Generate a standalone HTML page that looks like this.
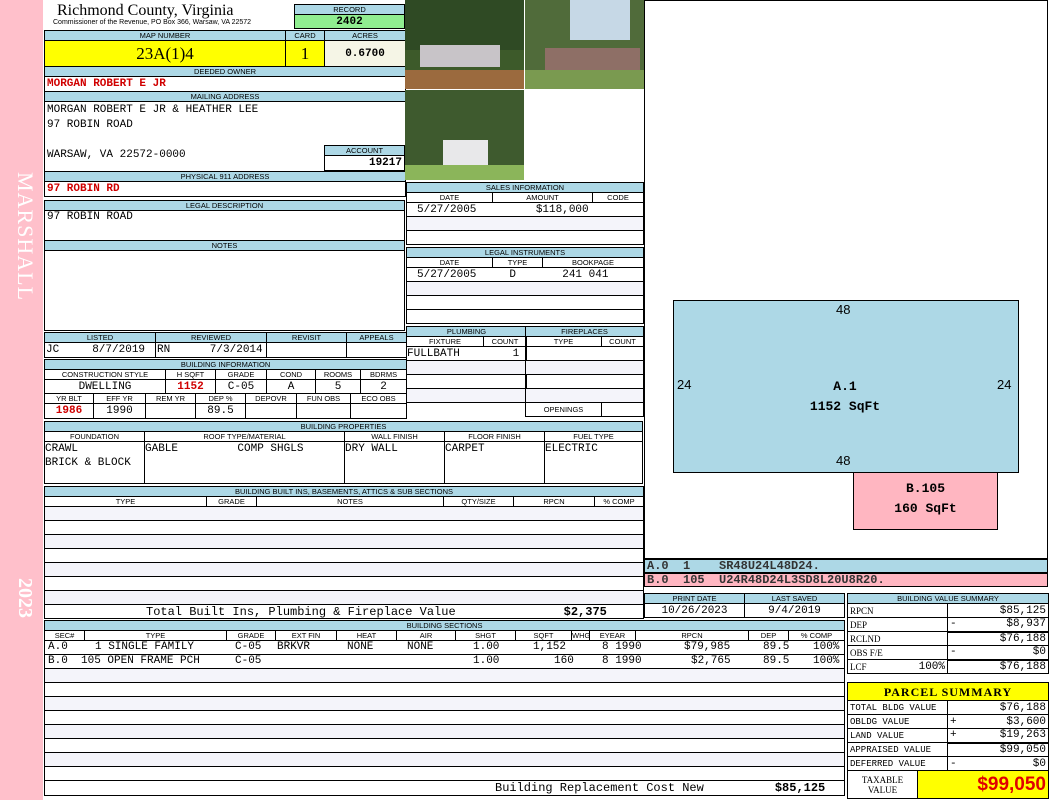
<!DOCTYPE html>
<html><head><meta charset="utf-8"><style>
*{margin:0;padding:0;box-sizing:border-box}
body{width:1050px;height:800px;position:relative;background:#fff;overflow:hidden;font-family:"Liberation Mono",monospace;font-size:11px;color:#000}
.a{position:absolute}
table{position:absolute;border-collapse:collapse;table-layout:fixed}
td{border:1px solid #000;padding:0 2px;overflow:hidden;white-space:nowrap;font-family:"Liberation Mono",monospace;font-size:11px;line-height:12px}
td.h{background:#add8e6;font-family:"Liberation Sans",sans-serif;font-size:7.5px;text-align:center;line-height:8px;height:10px;padding:0}
td.s{font-family:"Liberation Sans",sans-serif;font-size:7.5px;text-align:center;line-height:8px;height:10px;padding:0}
.c{text-align:center}.r{text-align:right}
.red{color:#d00000;font-weight:bold}
.g{background:#f4f4fa}
.box{position:absolute;border:1px solid #000}
</style></head><body>
<!-- sidebar -->
<div class="a" style="left:0;top:0;width:43px;height:800px;background:#ffc0cb"></div>
<div class="a" style="left:8px;top:172px;width:30px;height:145px;writing-mode:vertical-rl;font-family:'Liberation Serif',serif;font-size:22px;color:#fff;letter-spacing:1px">MARSHALL</div>
<div class="a" style="left:8px;top:578px;width:28px;height:50px;writing-mode:vertical-rl;font-family:'Liberation Serif',serif;font-size:20px;font-weight:bold;color:#fff">2023</div>

<!-- header -->
<div class="a" style="left:57px;top:2px;font-family:'Liberation Serif',serif;font-size:16px;line-height:18px">Richmond County, Virginia</div>
<div class="a" style="left:53px;top:19px;font-family:'Liberation Sans',sans-serif;font-size:7px;line-height:8px">Commissioner of the Revenue, PO Box 366, Warsaw, VA 22572</div>
<table style="left:294px;top:4px;width:111px"><tr><td class="h">RECORD</td></tr><tr><td class="c" style="background:#90ee90;font-weight:bold;height:14px">2402</td></tr></table>

<table style="left:44px;top:30px;width:361px">
<col style="width:241px"><col style="width:39px"><col style="width:81px">
<tr><td class="h">MAP NUMBER</td><td class="h">CARD</td><td class="h">ACRES</td></tr>
<tr><td class="c" style="background:#ffff00;height:26px;font-family:'Liberation Serif',serif;font-size:17px;line-height:20px">23A(1)4</td><td class="c" style="background:#ffff00;font-family:'Liberation Serif',serif;font-size:17px">1</td><td class="c" style="background:#f5f5e6;font-weight:bold">0.6700</td></tr>
<tr><td class="h" colspan="3">DEEDED OWNER</td></tr>
<tr><td colspan="3" class="red" style="height:15px">MORGAN ROBERT E JR</td></tr>
<tr><td class="h" colspan="3">MAILING ADDRESS</td></tr>
<tr><td colspan="3" style="height:70px;vertical-align:top;line-height:15px;padding-top:1px">MORGAN ROBERT E JR &amp; HEATHER LEE<br>97 ROBIN ROAD<br><br>WARSAW, VA 22572-0000</td></tr>
<tr><td class="h" colspan="3">PHYSICAL 911 ADDRESS</td></tr>
<tr><td colspan="3" class="red" style="height:15px">97 ROBIN RD</td></tr>
</table>
<table style="left:324px;top:145px;width:81px"><tr><td class="h">ACCOUNT</td></tr><tr><td class="r" style="height:15px;font-weight:bold;background:#fff">19217</td></tr></table>

<table style="left:44px;top:200px;width:361px">
<tr><td class="h">LEGAL DESCRIPTION</td></tr>
<tr><td style="height:30px;vertical-align:top">97 ROBIN ROAD</td></tr>
<tr><td class="h">NOTES</td></tr>
<tr><td style="height:80px"></td></tr>
</table>

<table style="left:44px;top:332px;width:362px">
<col style="width:111px"><col style="width:111px"><col style="width:80px"><col style="width:60px">
<tr><td class="h">LISTED</td><td class="h">REVIEWED</td><td class="h">REVISIT</td><td class="h">APPEALS</td></tr>
<tr><td style="height:15px;padding:0 1px">JC&nbsp;&nbsp;&nbsp;&nbsp;&nbsp;8/7/2019</td><td style="padding:0 1px">RN&nbsp;&nbsp;&nbsp;&nbsp;&nbsp;&nbsp;7/3/2014</td><td></td><td></td></tr>
</table>
<table style="left:44px;top:359px;width:362px">
<col style="width:121px"><col style="width:50px"><col style="width:51px"><col style="width:49px"><col style="width:45px"><col style="width:46px">
<tr><td class="h" colspan="6">BUILDING INFORMATION</td></tr>
<tr><td class="s">CONSTRUCTION STYLE</td><td class="s">H SQFT</td><td class="s">GRADE</td><td class="s">COND</td><td class="s">ROOMS</td><td class="s">BDRMS</td></tr>
<tr><td class="c" style="height:14px">DWELLING</td><td class="c red">1152</td><td class="c">C-05</td><td class="c">A</td><td class="c">5</td><td class="c">2</td></tr>
</table>
<table style="left:44px;top:393px;width:362px">
<col style="width:49px"><col style="width:52px"><col style="width:50px"><col style="width:50px"><col style="width:51px"><col style="width:54px"><col style="width:56px">
<tr><td class="s">YR BLT</td><td class="s">EFF YR</td><td class="s">REM YR</td><td class="s">DEP %</td><td class="s">DEPOVR</td><td class="s">FUN OBS</td><td class="s">ECO OBS</td></tr>
<tr><td class="c red" style="height:15px">1986</td><td class="c">1990</td><td></td><td class="c">89.5</td><td></td><td></td><td></td></tr>
</table>

<table style="left:44px;top:421px;width:598px">
<col style="width:100px"><col style="width:200px"><col style="width:100px"><col style="width:100px"><col style="width:98px">
<tr><td class="h" colspan="5">BUILDING PROPERTIES</td></tr>
<tr><td class="s">FOUNDATION</td><td class="s">ROOF TYPE/MATERIAL</td><td class="s">WALL FINISH</td><td class="s">FLOOR FINISH</td><td class="s">FUEL TYPE</td></tr>
<tr><td style="height:42px;vertical-align:top;line-height:14px;padding:0">CRAWL<br>BRICK &amp; BLOCK</td><td style="vertical-align:top;line-height:14px;padding:0">GABLE&nbsp;&nbsp;&nbsp;&nbsp;&nbsp;&nbsp;&nbsp;&nbsp;&nbsp;COMP SHGLS</td><td style="vertical-align:top;line-height:14px;padding:0">DRY WALL</td><td style="vertical-align:top;line-height:14px;padding:0">CARPET</td><td style="vertical-align:top;line-height:14px;padding:0">ELECTRIC</td></tr>
</table>

<table style="left:44px;top:486px;width:599px">
<col style="width:162px"><col style="width:50px"><col style="width:187px"><col style="width:70px"><col style="width:81px"><col style="width:49px">
<tr><td class="h" colspan="6">BUILDING BUILT INS, BASEMENTS, ATTICS &amp; SUB SECTIONS</td></tr>
<tr><td class="s">TYPE</td><td class="s">GRADE</td><td class="s">NOTES</td><td class="s">QTY/SIZE</td><td class="s">RPCN</td><td class="s">% COMP</td></tr>
<tr><td colspan="6" class="g" style="height:14px"></td></tr>
<tr><td colspan="6" style="height:14px"></td></tr>
<tr><td colspan="6" class="g" style="height:14px"></td></tr>
<tr><td colspan="6" style="height:14px"></td></tr>
<tr><td colspan="6" class="g" style="height:14px"></td></tr>
<tr><td colspan="6" style="height:14px"></td></tr>
<tr><td colspan="6" class="g" style="height:14px"></td></tr>
<tr><td colspan="6" style="height:14px;font-size:12px"><span style="margin-left:99px">Total Built Ins, Plumbing &amp; Fireplace Value</span><span style="margin-left:108px;font-weight:bold">$2,375</span></td></tr>
</table>

<table style="left:44px;top:620px;width:800px">
<col style="width:40px"><col style="width:142px"><col style="width:49px"><col style="width:61px"><col style="width:60px"><col style="width:59px"><col style="width:60px"><col style="width:56px"><col style="width:18px"><col style="width:46px"><col style="width:113px"><col style="width:40px"><col style="width:56px">
<tr><td class="h" colspan="13">BUILDING SECTIONS</td></tr>
<tr><td class="s">SEC#</td><td class="s">TYPE</td><td class="s">GRADE</td><td class="s">EXT FIN</td><td class="s">HEAT</td><td class="s">AIR</td><td class="s">SHGT</td><td class="s">SQFT</td><td class="s">WHGT</td><td class="s">EYEAR</td><td class="s">RPCN</td><td class="s">DEP</td><td class="s">% COMP</td></tr>
<tr><td colspan="13" style="height:14px;padding:0;border-top:0;border-bottom:0"><div style="position:relative;height:13px">
<span class="a" style="left:3px">A.0</span><span class="a" style="left:50px">1 SINGLE FAMILY</span><span class="a" style="left:190px">C-05</span><span class="a" style="left:232px">BRKVR</span><span class="a" style="left:302px">NONE</span><span class="a" style="left:362px">NONE</span><span class="a" style="left:428px">1.00</span><span class="a" style="left:488px">1,152</span><span class="a" style="left:557px">8 1990</span><span class="a" style="left:639px">$79,985</span><span class="a" style="left:718px">89.5</span><span class="a" style="left:768px">100%</span></div></td></tr>
<tr><td colspan="13" style="height:14px;padding:0"><div style="position:relative;height:13px">
<span class="a" style="left:3px">B.0</span><span class="a" style="left:36px">105 OPEN FRAME PCH</span><span class="a" style="left:190px">C-05</span><span class="a" style="left:428px">1.00</span><span class="a" style="left:509px">160</span><span class="a" style="left:557px">8 1990</span><span class="a" style="left:646px">$2,765</span><span class="a" style="left:718px">89.5</span><span class="a" style="left:768px">100%</span></div></td></tr>
<tr><td colspan="13" class="g" style="height:14px"></td></tr>
<tr><td colspan="13" style="height:14px"></td></tr>
<tr><td colspan="13" class="g" style="height:14px"></td></tr>
<tr><td colspan="13" style="height:14px"></td></tr>
<tr><td colspan="13" class="g" style="height:14px"></td></tr>
<tr><td colspan="13" style="height:14px"></td></tr>
<tr><td colspan="13" class="g" style="height:14px"></td></tr>
<tr><td colspan="13" style="height:14px"></td></tr>
<tr><td colspan="13" style="height:15px;font-size:12px"><span style="margin-left:448px">Building Replacement Cost New</span><span style="margin-left:71px;font-weight:bold">$85,125</span></td></tr>
</table>

<!-- photos -->
<svg class="a" style="left:405px;top:0" width="239" height="181">
<rect x="0" y="0" width="119" height="89" fill="#3d5a2a"/>
<rect x="0" y="0" width="119" height="50" fill="#2f4a24"/>
<rect x="0" y="70" width="119" height="19" fill="#9b6a3e"/>
<rect x="15" y="45" width="80" height="22" fill="#c8c4c8"/>
<rect x="120" y="0" width="119" height="89" fill="#506b3a"/>
<rect x="165" y="0" width="60" height="40" fill="#c6d8e6"/>
<rect x="140" y="48" width="95" height="22" fill="#8e6f66"/>
<rect x="120" y="70" width="119" height="19" fill="#7a9a50"/>
<rect x="0" y="90" width="119" height="90" fill="#3e5a2e"/>
<rect x="0" y="165" width="119" height="15" fill="#8bb55a"/>
<rect x="38" y="140" width="45" height="25" fill="#e8e8ea"/>
</svg>
<div class="box" style="left:644px;top:0;width:404px;height:559px"></div>
<div class="box" style="left:673px;top:300px;width:346px;height:173px;background:#add8e6"></div>
<div class="box" style="left:853px;top:472px;width:145px;height:58px;background:#ffb6c1"></div>
<div class="a" style="left:836px;top:302px;font-family:'Liberation Sans',sans-serif;font-size:13px">48</div>
<div class="a" style="left:836px;top:453px;font-family:'Liberation Sans',sans-serif;font-size:13px">48</div>
<div class="a" style="left:677px;top:377px;font-family:'Liberation Sans',sans-serif;font-size:13px">24</div>
<div class="a" style="left:997px;top:377px;font-family:'Liberation Sans',sans-serif;font-size:13px">24</div>
<div class="a" style="left:780px;top:377px;width:130px;text-align:center;font-weight:bold;font-size:13px;line-height:20px">A.1<br>1152 SqFt</div>
<div class="a" style="left:853px;top:479px;width:145px;text-align:center;font-weight:bold;font-size:13px;line-height:20px">B.105<br>160 SqFt</div>

<div class="a" style="left:644px;top:559px;width:404px;height:14px;background:#add8e6;border:1px solid #000;font-size:12px;line-height:12px;font-weight:bold;color:#333;padding-left:2px;white-space:pre">A.0  1    SR48U24L48D24.</div>
<div class="a" style="left:644px;top:573px;width:404px;height:14px;background:#ffb6c1;border:1px solid #000;font-size:12px;line-height:12px;font-weight:bold;color:#333;padding-left:2px;white-space:pre">B.0  105  U24R48D24L3SD8L20U8R20.</div>

<!-- sales -->
<table style="left:406px;top:182px;width:237px">
<col style="width:86px"><col style="width:100px"><col style="width:51px">
<tr><td class="h" colspan="3">SALES INFORMATION</td></tr>
<tr><td class="s">DATE</td><td class="s">AMOUNT</td><td class="s">CODE</td></tr>
<tr><td colspan="3" style="height:14px;padding-left:10px;white-space:pre">5/27/2005         $118,000</td></tr>
<tr><td colspan="3" class="g" style="height:14px"></td></tr>
<tr><td colspan="3" style="height:14px"></td></tr>
</table>
<table style="left:406px;top:247px;width:237px">
<col style="width:86px"><col style="width:50px"><col style="width:101px">
<tr><td class="h" colspan="3">LEGAL INSTRUMENTS</td></tr>
<tr><td class="s">DATE</td><td class="s">TYPE</td><td class="s">BOOKPAGE</td></tr>
<tr><td colspan="3" style="height:14px;padding-left:10px;white-space:pre">5/27/2005     D       241 041</td></tr>
<tr><td colspan="3" class="g" style="height:14px"></td></tr>
<tr><td colspan="3" style="height:14px"></td></tr>
<tr><td colspan="3" style="height:14px"></td></tr>
</table>
<table style="left:406px;top:326px;width:120px">
<col style="width:77px"><col style="width:43px">
<tr><td class="h" colspan="2">PLUMBING</td></tr>
<tr><td class="s">FIXTURE</td><td class="s">COUNT</td></tr>
<tr><td colspan="2" style="height:14px;padding:0;white-space:pre">FULLBATH        1</td></tr>
<tr><td colspan="2" class="g" style="height:14px"></td></tr>
<tr><td colspan="2" style="height:14px"></td></tr>
<tr><td colspan="2" class="g" style="height:14px"></td></tr>
</table>
<table style="left:525px;top:326px;width:118px">
<col style="width:76px"><col style="width:42px">
<tr><td class="h" colspan="2">FIREPLACES</td></tr>
<tr><td class="s">TYPE</td><td class="s">COUNT</td></tr>
<tr><td colspan="2" style="height:14px"></td></tr>
<tr><td colspan="2" class="g" style="height:14px"></td></tr>
<tr><td colspan="2" style="height:14px"></td></tr>
<tr><td colspan="2" class="g" style="height:14px"></td></tr>
<tr><td class="s" style="height:14px">OPENINGS</td><td></td></tr>
</table>

<table style="left:644px;top:593px;width:200px">
<col style="width:100px"><col style="width:100px">
<tr><td class="h">PRINT DATE</td><td class="h">LAST SAVED</td></tr>
<tr><td class="c" style="height:14px">10/26/2023</td><td class="c">9/4/2019</td></tr>
</table>

<table style="left:847px;top:593px;width:201px">
<col style="width:100px"><col style="width:101px">
<tr><td class="h" colspan="2">BUILDING VALUE SUMMARY</td></tr>
<tr><td style="height:14px;font-size:9px;font-family:'Liberation Serif',serif">RPCN</td><td class="r">$85,125</td></tr>
<tr><td style="height:14px;font-size:9px;font-family:'Liberation Serif',serif">DEP</td><td class="r" style="border-bottom:2px solid #000"><span style="float:left">-</span>$8,937</td></tr>
<tr><td style="height:14px;font-size:9px;font-family:'Liberation Serif',serif">RCLND</td><td class="r">$76,188</td></tr>
<tr><td style="height:14px;font-size:9px;font-family:'Liberation Serif',serif">OBS F/E</td><td class="r" style="border-bottom:2px solid #000"><span style="float:left">-</span>$0</td></tr>
<tr><td style="height:14px;font-size:9px;font-family:'Liberation Serif',serif">LCF<span style="float:right;font-family:'Liberation Mono',monospace;font-size:11px">100%</span></td><td class="r">$76,188</td></tr>
</table>

<table style="left:847px;top:682px;width:201px">
<col style="width:70px"><col style="width:30px"><col style="width:101px">
<tr><td colspan="3" class="c" style="background:#ffff00;height:18px;font-weight:bold;font-family:'Liberation Serif',serif;font-size:12px;letter-spacing:1px">PARCEL SUMMARY</td></tr>
<tr><td colspan="2" style="height:14px;font-size:9px">TOTAL BLDG VALUE</td><td class="r">$76,188</td></tr>
<tr><td colspan="2" style="height:14px;font-size:9px">OBLDG VALUE</td><td class="r"><span style="float:left">+</span>$3,600</td></tr>
<tr><td colspan="2" style="height:14px;font-size:9px">LAND VALUE</td><td class="r" style="border-bottom:2px solid #000"><span style="float:left">+</span>$19,263</td></tr>
<tr><td colspan="2" style="height:14px;font-size:9px">APPRAISED VALUE</td><td class="r">$99,050</td></tr>
<tr><td colspan="2" style="height:14px;font-size:9px">DEFERRED VALUE</td><td class="r"><span style="float:left">-</span>$0</td></tr>
<tr><td class="c" style="height:28px;font-size:9px;line-height:10px;font-family:'Liberation Serif',serif">TAXABLE<br>VALUE</td><td colspan="2" class="r" style="background:#ffff00;color:#e00000;font-family:'Liberation Sans',sans-serif;font-weight:bold;font-size:19px;line-height:20px">$99,050</td></tr>
</table>
</body></html>
